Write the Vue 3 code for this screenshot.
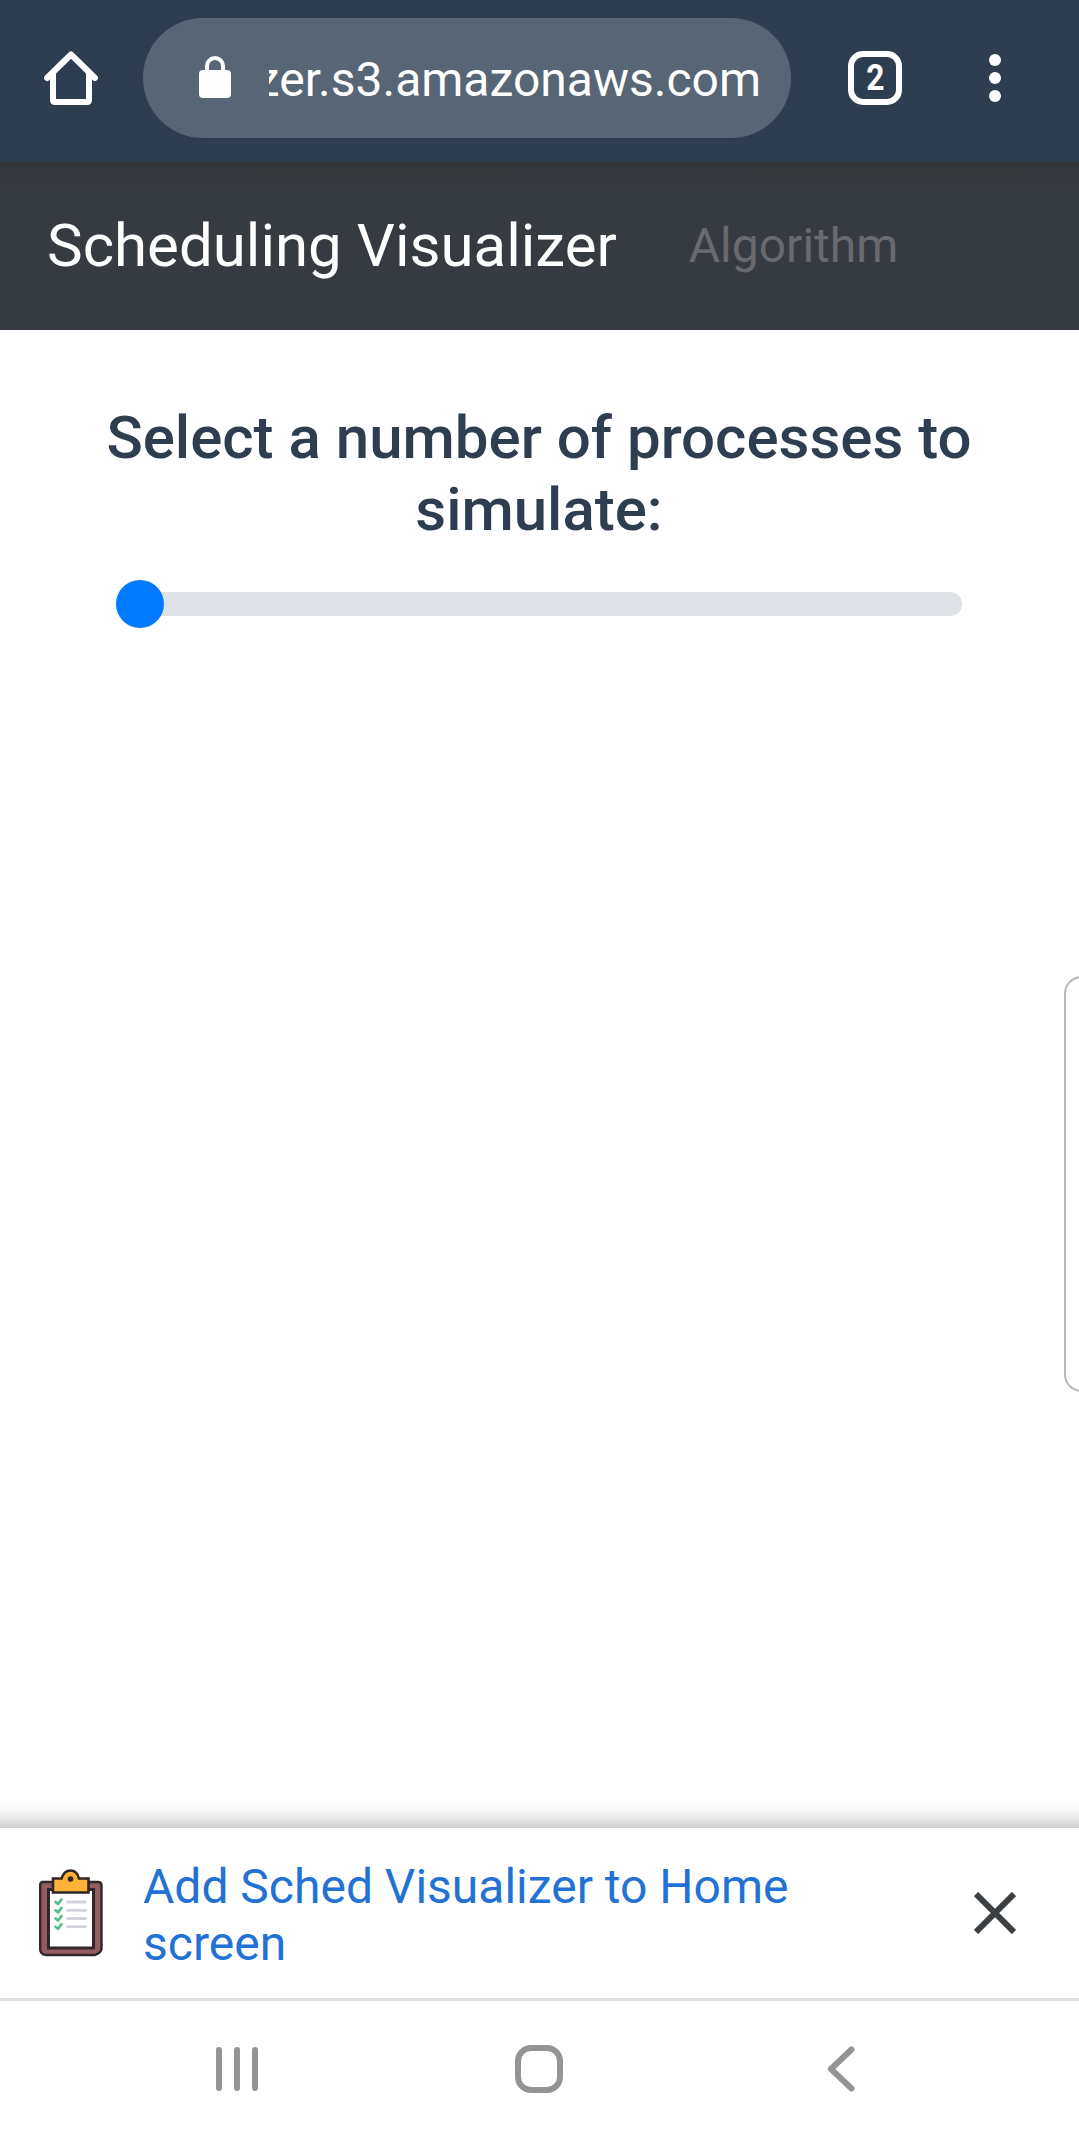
<script setup>
import { ref } from 'vue'

const tabCount = ref(2)
const checks = [0, 8.3, 16.5, 24.7]
</script>

<template>
  <div class="screen">
    <header class="toolbar">
      <svg class="home" viewBox="0 0 54 54" aria-label="Home">
        <path d="M3 27 27 3.5 51 27M9 22V49q0 2 2 2H43q2 0 2-2V22" fill="none" stroke="#fff" stroke-width="6" stroke-linecap="round" stroke-linejoin="round" />
      </svg>
      <div class="omnibox">
        <svg class="lock" viewBox="0 0 32 42">
          <path d="M8 16V10a8 8 0 0 1 16 0V16" fill="none" stroke="#fff" stroke-width="4" />
          <rect y="14" width="32" height="28" rx="4" fill="#fff" />
        </svg>
        <div class="url"><span>zer.s3.amazonaws.com</span></div>
      </div>
      <div class="tabs"><span>{{ tabCount }}</span></div>
      <div class="menu"><i></i><i></i><i></i></div>
    </header>

    <nav class="navbar">
      <span class="brand">Scheduling Visualizer</span>
      <span class="link">Algorithm</span>
    </nav>

    <main class="content">
      <h1>Select a number of processes to<br />simulate:</h1>
      <div class="slider"><div class="thumb"></div></div>
      <div class="edge"></div>
    </main>

    <section class="banner">
      <svg class="clipboard" viewBox="0 0 64 88">
        <path d="M4 13H59q3.500 0 3.500 3.500V80q0 2-2 3.500T56 86H7q-3 0-4.500-2T1.200 80V16.500Q1 13 4 13Z" fill="#925c60" stroke="#30272a" stroke-width="2.400" />
        <rect x="9.500" y="20.500" width="45" height="58.500" fill="#fff" stroke="#30272a" stroke-width="3" />
        <path d="M14 9.500H22.500Q25 1.500 31.500 1.500T40 9.500H49.500V23.500H14Z" fill="#ffb238" stroke="#30272a" stroke-width="2.600" />
        <circle cx="31.500" cy="10" r="2.800" fill="#30272a" />
        <g v-for="y in checks" :key="y" fill="none" stroke-linecap="round">
          <path :d="`M16.500 ${y + 33}l2.500 2 3.500-4.500`" stroke="#4fbd88" stroke-width="2.600" />
          <path :d="`M28.500 ${y + 33}h18`" stroke="#d2d2dc" stroke-width="2.800" />
        </g>
      </svg>
      <p>Add Sched Visualizer to Home<br />screen</p>
      <svg class="close" viewBox="0 0 42 42"><path d="M2 2 40 40M40 2 2 40" stroke="#3c4043" stroke-width="6" /></svg>
    </section>

    <footer class="system">
      <svg viewBox="0 0 48 48"><path d="M6 5V43M24 5V43M42 5V43" /></svg>
      <svg viewBox="0 0 48 48"><rect x="3" y="3" width="42" height="42" rx="13" /></svg>
      <svg viewBox="0 0 48 48"><path d="M34.500 4.500 14 24 34.500 43.500" /></svg>
    </footer>
  </div>
</template>

<style>
body { margin: 0; }
</style>

<style scoped>
.screen {
  width: 1079px;
  height: 2141px;
  display: flex;
  flex-direction: column;
  overflow: hidden;
  background: #fff;
  font-family: Roboto, "Liberation Sans", sans-serif;
}
.toolbar {
  flex: none;
  box-sizing: border-box;
  height: 162px;
  padding: 0 78px 6px 44px;
  display: flex;
  align-items: center;
  background: #2e3e50;
}
.home { width: 54px; height: 54px; }
.omnibox {
  box-sizing: border-box;
  width: 648px;
  height: 120px;
  margin-left: 45px;
  padding: 0 30px 0 56px;
  display: flex;
  align-items: center;
  border-radius: 60px;
  background: #586574;
}
.lock { flex: none; width: 32px; height: 42px; margin-bottom: 2px; }
.url {
  width: 492px;
  margin-left: 38px;
  display: flex;
  justify-content: flex-end;
  overflow: hidden;
  white-space: nowrap;
  color: #fff;
  font-size: 48px;
  line-height: 60px;
  padding-top: 3px;
}
.tabs {
  box-sizing: border-box;
  width: 54px;
  height: 54px;
  margin-left: 57px;
  border: 6px solid #fff;
  border-radius: 15px;
  display: flex;
  align-items: center;
  justify-content: center;
  color: #fff;
  font-size: 36px;
  font-weight: 700;
  line-height: 42px;
}
.tabs span { transform: scaleX(.88); }
.menu {
  margin-left: 87px;
  display: flex;
  flex-direction: column;
  gap: 6px;
}
.menu i { width: 12px; height: 12px; border-radius: 50%; background: #fff; }
.navbar {
  flex: none;
  box-sizing: border-box;
  height: 168px;
  padding: 0 47px;
  display: flex;
  align-items: center;
  background: linear-gradient(#323639, #363a3f 14px, #363a41 24px);
}
.brand { color: #fff; font-size: 60px; line-height: 90px; }
.link { margin-left: 72px; color: #686a6f; font-size: 48px; line-height: 72px; }
.content {
  position: relative;
  flex: none;
  box-sizing: border-box;
  height: 1498px;
  padding-top: 72px;
  background: linear-gradient(transparent 1471px, #f7f7f7 1481px, #e8e8e8 1488px, #cfcfcf 1498px);
}
h1 {
  margin: 0 1px 0 0;
  text-align: center;
  color: #2e3e50;
  font-size: 60px;
  font-weight: 500;
  line-height: 72px;
}
.slider {
  width: 846px;
  height: 24px;
  margin: 46px 0 0 116px;
  display: flex;
  align-items: center;
  border-radius: 12px;
  background: #dee1e6;
}
.thumb { width: 48px; height: 48px; border-radius: 50%; background: #007bff; }
.edge {
  position: absolute;
  top: 646px;
  right: -20px;
  box-sizing: border-box;
  width: 35px;
  height: 416px;
  border: 2px solid #b8b8b8;
  border-radius: 20px;
}
.banner {
  flex: none;
  box-sizing: border-box;
  height: 173px;
  padding: 0 63px 0 39px;
  display: flex;
  align-items: center;
  border-bottom: 3px solid #dfdfdf;
  background: #fff;
}
.clipboard { width: 64px; height: 88px; }
.banner p {
  margin: 0 auto 0 40px;
  padding-top: 4px;
  color: #2271d5;
  font-size: 48px;
  line-height: 57px;
}
.close { width: 42px; height: 42px; }
.system {
  flex: 1;
  display: flex;
  align-items: center;
  justify-content: space-between;
  padding: 0 214px 4px 213px;
}
.system svg {
  width: 48px;
  height: 48px;
  fill: none;
  stroke: #949494;
  stroke-width: 6;
  stroke-linecap: round;
  stroke-linejoin: round;
}
</style>
